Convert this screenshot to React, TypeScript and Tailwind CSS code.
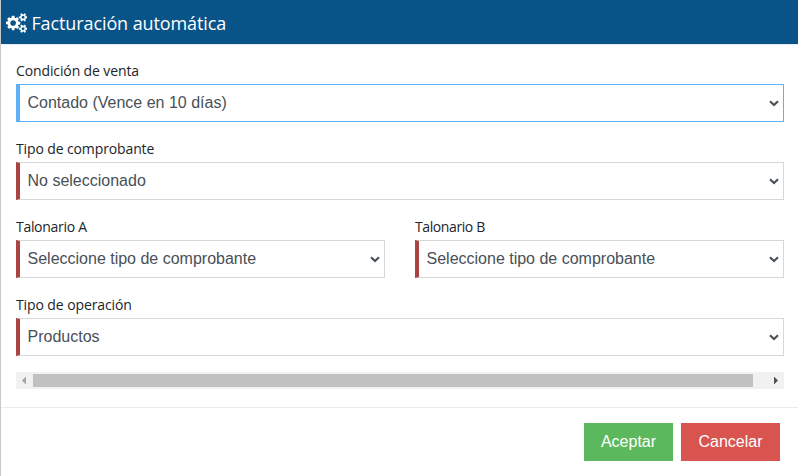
type FieldProps = {
  label: string;
  value: string;
  focused?: boolean;
  labelSpacing: string;
};

const SMALL_GEAR =
  "v140q0 16-149 31-12 27-30 52 51 113 51 138 0 4-4 7-122 71-124 71-8 0-46-47t-52-68q-20 2-30 2t-30-2q-14 21-52 68t-46 47q-2 0-124-71-4-3-4-7 0-25 51-138-18-25-30-52-149-15-149-31v-140q0-16 149-31 13-29 30-52-51-113-51-138 0-4 4-7 4-2 35-20t59-34 30-16q8 0 46 46.5t52 67.5q20-2 30-2t30 2q51-71 92-112l6-2q4 0 124 70 4 3 4 7 0 25-51 138 17 23 30 52 149 15 149 31z";

function CogsIcon() {
  return (
    <svg className="mt-0.5 h-5 w-[21.4px]" viewBox="0 0 1920 1792" fill="currentColor">
      <path
        fillRule="evenodd"
        d={`M896 896q0-106-75-181t-181-75-181 75-75 181 75 181 181 75 181-75 75-181zm768 512q0-52-38-90t-90-38-90 38-38 90q0 53 37.5 90.5t90.5 37.5 90.5-37.5 37.5-90.5zm0-1024q0-52-38-90t-90-38-90 38-38 90q0 53 37.5 90.5t90.5 37.5 90.5-37.5 37.5-90.5zm-384 421v185q0 10-7 19.5t-16 10.5l-155 24q-11 35-32 76 34 48 90 115 7 11 7 20 0 12-7 19-23 30-82.5 89.5t-78.5 59.5q-11 0-21-7l-115-90q-37 19-77 31-11 108-23 155-7 24-30 24h-186q-11 0-20-7.5t-10-17.5l-23-153q-34-10-75-31l-118 89q-7 7-20 7-11 0-21-8-144-133-144-160 0-9 7-19 10-14 41-53t47-61q-23-44-35-82l-152-24q-10-1-17-9.5t-7-19.5v-185q0-10 7-19.5t16-10.5l155-24q11-35 32-76-34-48-90-115-7-11-7-20 0-12 7-20 22-30 82-89t79-59q11 0 21 7l115 90q34-18 77-32 11-108 23-154 7-24 30-24h186q11 0 20 7.5t10 17.5l23 153q34 10 75 31l118-89q8-7 20-7 11 0 21 8 144 133 144 160 0 8-7 19-12 16-42 54t-45 60q23 48 34 82l152 23q10 2 17 10.5t7 19.5zM1920 1338${SMALL_GEAR}M1920 314${SMALL_GEAR}`}
      />
    </svg>
  );
}

function SelectField({ label, value, focused = false, labelSpacing }: FieldProps) {
  return (
    <label className="block min-w-0 flex-1">
      <span
        className={`block h-[26px] whitespace-nowrap font-['Open_Sans','Noto_Sans',sans-serif] text-[14px] leading-[25px] text-[#212529] ${labelSpacing}`}
      >
        {label}
      </span>
      <span className="relative block">
        <select
          className={`block h-[38px] w-full appearance-none border border-l-4 bg-white pr-6 pb-px pl-[7.5px] font-['Liberation_Sans',Arial,sans-serif] text-[16px] text-[#495057] outline-none ${
            focused ? "border-[#5eb0f7]" : "border-[#d6d7d9] border-l-[#a94442]"
          }`}
        >
          <option>{value}</option>
        </select>
        <svg
          className="pointer-events-none absolute top-4 right-[5px] h-[7px] w-[10px]"
          viewBox="0 0 10 7"
          fill="none"
          stroke="#495057"
          strokeWidth="2.2"
        >
          <path d="M1 1.3 L5 5 L9 1.3" />
        </svg>
      </span>
    </label>
  );
}

export default function App() {
  return (
    <div className="flex h-[476px] w-[798px] flex-col border-l border-[#c8c8c8] bg-white">
      <header className="flex h-[45px] items-center border-b border-[#e9ecef] bg-[#085387] bg-clip-padding pl-[5px] text-white">
        <CogsIcon />
        <h1 className="ml-1 pt-0.5 font-['Open_Sans','Noto_Sans',sans-serif] text-[18px] leading-6 tracking-[-0.1px]">
          Facturación automática
        </h1>
      </header>
      <main className="flex flex-col gap-[14px] pt-[13px] pr-[14px] pl-[15px]">
        <SelectField label="Condición de venta" value="Contado (Vence en 10 días)" focused labelSpacing="tracking-[-0.12px]" />
        <SelectField label="Tipo de comprobante" value="No seleccionado" labelSpacing="tracking-[-0.12px]" />
        <div className="flex gap-[30px]">
          <SelectField label="Talonario A" value="Seleccione tipo de comprobante" labelSpacing="tracking-[-0.3px]" />
          <SelectField label="Talonario B" value="Seleccione tipo de comprobante" labelSpacing="tracking-[-0.4px]" />
        </div>
        <SelectField label="Tipo de operación" value="Productos" labelSpacing="tracking-[-0.1px]" />
      </main>
      <div className="mt-4 mr-[14px] ml-[15px] flex h-[17px] items-center bg-[#f1f1f1]">
        <div className="w-[17px] pl-1.5">
          <svg className="h-[7px] w-1" viewBox="0 0 4 7" fill="#a3a3a3">
            <path d="M4 -0.5 V7.5 L0 3.5 Z" />
          </svg>
        </div>
        <div className="h-[13px] w-[720px] bg-[#c1c1c1]" />
        <div className="ml-auto w-[17px] pl-[7px]">
          <svg className="h-[7px] w-1" viewBox="0 0 4 7" fill="#505050">
            <path d="M0 -0.5 V7.5 L4 3.5 Z" />
          </svg>
        </div>
      </div>
      <footer className="mt-[18px] flex justify-end gap-2 border-t border-[#e9ecef] pt-[15px] pr-[18px] font-['Liberation_Sans',Arial,sans-serif] text-[16px] text-white">
        <button className="h-[38px] w-[89px] bg-[#5cb85c] pb-px">Aceptar</button>
        <button className="h-[38px] w-[99px] bg-[#d9534f] pb-px">Cancelar</button>
      </footer>
    </div>
  );
}
